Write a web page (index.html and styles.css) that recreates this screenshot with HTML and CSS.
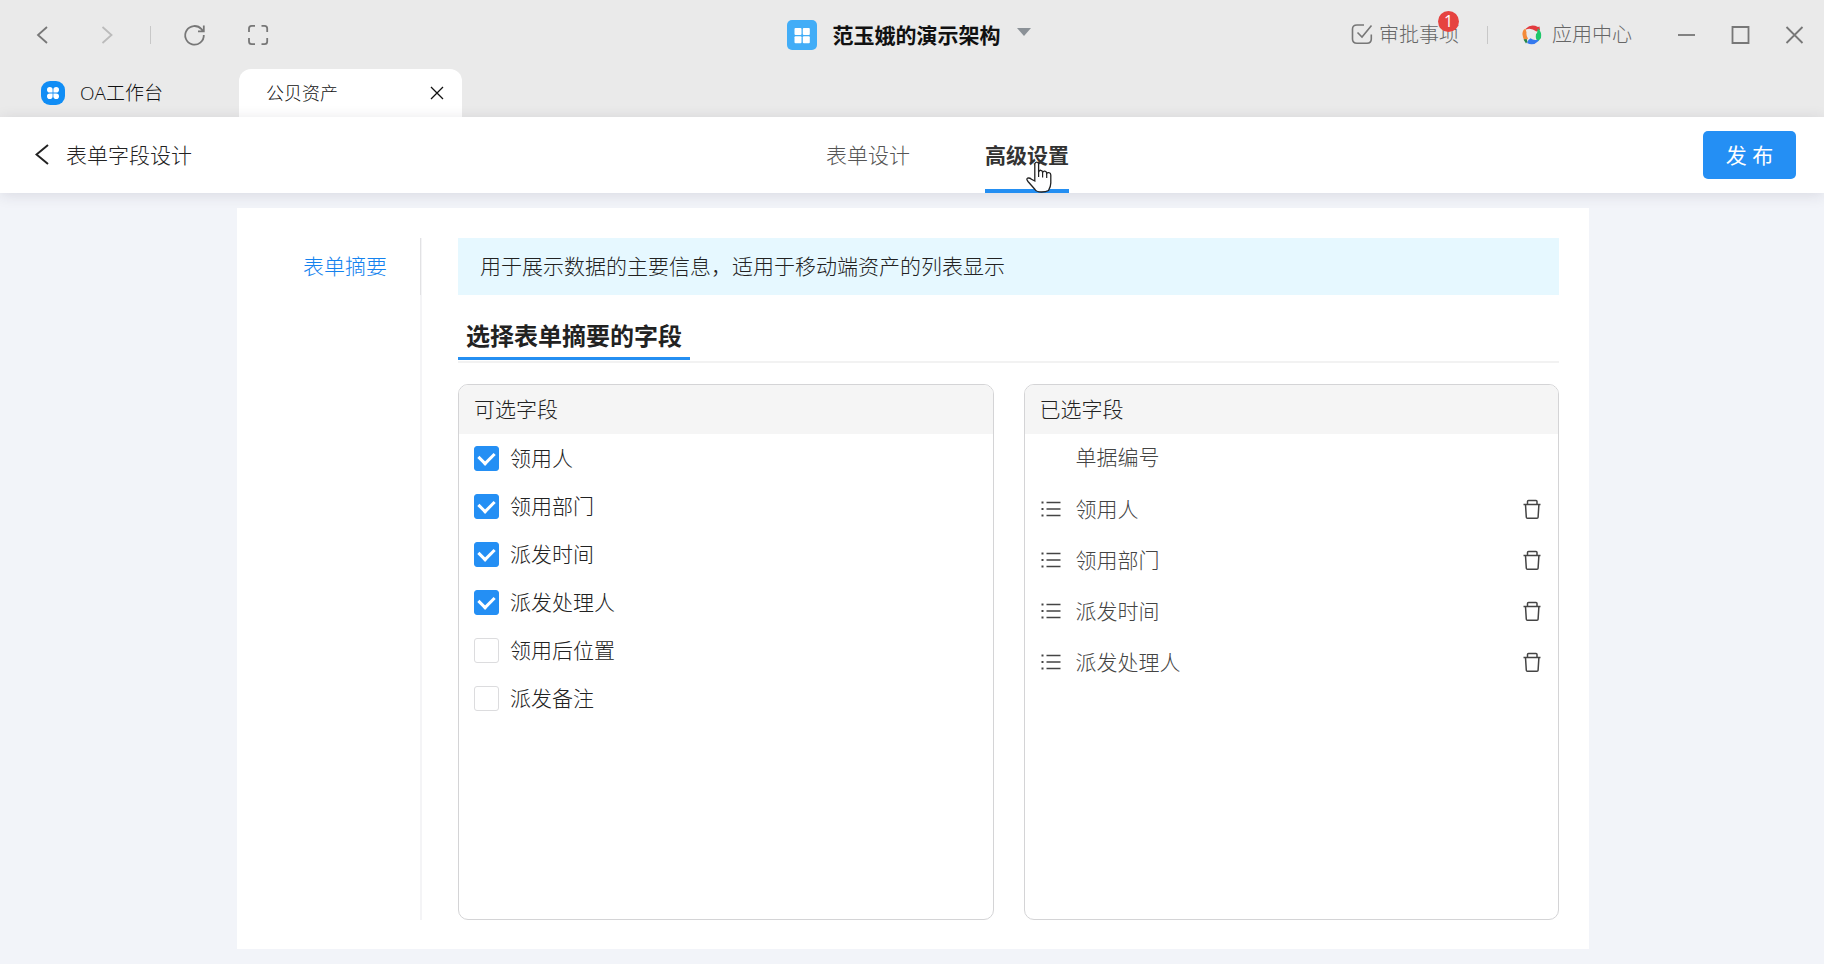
FILE: index.html
```html
<!DOCTYPE html>
<html lang="zh-CN">
<head>
<meta charset="utf-8">
<meta name="viewport" content="width=device-width, initial-scale=1">
<title>公贝资产 - 高级设置</title>
<link rel="stylesheet" href="styles.css">
</head>
<body>
<svg class="defs" aria-hidden="true">
  <symbol id="i-list" viewBox="0 0 20 20"><path d="M5.500 3.500H19.500M5.500 10H19.500M5.500 16.500H19.500" fill="none" stroke="currentColor" stroke-width="1.700"/><path d="M.5 2.500h2v2h-2zM.5 9h2v2h-2zM.5 15.500h2v2h-2z" fill="currentColor"/></symbol>
  <symbol id="i-trash" viewBox="0 0 24 24"><path d="M3.500 7.500H20.500M7.500 7V4.500Q7.500 3.500 8.500 3.500H16Q17 3.500 17 4.500V7M5.500 7.500L6.300 20.200Q6.400 21.200 7.400 21.200H17Q18 21.200 18.100 20.200L18.900 7.500" fill="none" stroke="currentColor" stroke-width="1.500"/></symbol>
</svg>

<header class="titlebar">
  <div class="browse">
    <button class="icon-btn" type="button" aria-label="后退"><svg viewBox="0 0 24 24"><path d="M16 4L7 12L16 20"/></svg></button>
    <button class="icon-btn icon-btn--off" type="button" aria-label="前进" disabled><svg viewBox="0 0 24 24"><path d="M7.500 4L16.500 12L7.500 20"/></svg></button>
    <span class="sep"></span>
    <button class="icon-btn" type="button" aria-label="刷新"><svg viewBox="0 0 24 24"><path d="M21.800 12A9.300 9.300 0 1 1 19.500 6.200L21 8M21.800 2.500V8.300H16"/></svg></button>
    <button class="icon-btn" type="button" aria-label="全屏"><svg viewBox="0 0 24 24"><path d="M3 9V5.500Q3 2.800 5.700 2.800H9M15.500 2.800H18.500Q21.200 2.800 21.200 5.500V9M21.200 15V18.500Q21.200 21.200 18.500 21.200H15.500M9 21.200H5.700Q3 21.200 3 18.500V15"/></svg></button>
  </div>
  <button class="org" type="button">
    <svg class="org__logo" viewBox="0 0 30 30"><rect width="30" height="30" rx="5" fill="#42adf7"/><g fill="#fff"><rect x="7.500" y="8" width="7" height="7" rx="1"/><rect x="15.800" y="8" width="7" height="7" rx="1"/><rect x="7.500" y="16.300" width="7" height="7" rx="1"/><rect x="15.800" y="16.300" width="7" height="7" rx="1"/></g></svg>
    <span>范玉娥的演示架构</span>
    <svg class="org__caret" viewBox="0 0 14 8"><path d="M0 0H14L7 8Z" fill="#8b9197"/></svg>
  </button>
  <div class="tools">
    <button class="tool tool--todo" type="button">
      <svg class="tool__check" viewBox="0 0 22 22"><path d="M13 2H6Q1.500 2 1.500 6V16Q1.500 20.200 6 20.200H16Q20.300 20.200 20.300 16V11.500M6.500 9.500L11 14L20.500 2.500" fill="none" stroke="#777" stroke-width="1.600"/></svg>
      <span>审批事项</span>
      <span class="badge">1</span>
    </button>
    <span class="sep"></span>
    <button class="tool" type="button">
      <svg class="tool__app" viewBox="0 0 20 20"><path d="M4 3.500Q9-1.500 16 2L17.500 1.500L18 5L14.500 6.500Q9 2.500 4 4.500Z" fill="#e23b3f"/><path d="M16.200 3.500Q20 7 19 13L16.500 16Q13 15 14 9Q15.500 8 15.500 5Z" fill="#1fc76a"/><path d="M16 14.500L16.500 16Q11 21.500 5 18Q5.500 15 8.500 13.300Q12 16 16 14.500Z" fill="#3579ee"/><path d="M3.500 3.500L4.500 7.500Q4 11 6 13.500L4.500 15L3.500 17Q-1.500 10 1.500 5Z" fill="#f48a38"/><path d="M1.500 14.500L4.500 14L5.500 16.500L4 18.500Z" fill="#23864b"/></svg>
      <span>应用中心</span>
    </button>
    <div class="win">
      <button class="icon-btn" type="button" aria-label="最小化"><svg viewBox="0 0 24 24"><path d="M3 12H20"/></svg></button>
      <button class="icon-btn" type="button" aria-label="最大化"><svg viewBox="0 0 24 24"><path d="M3.500 4H19.500V20H3.500Z"/></svg></button>
      <button class="icon-btn" type="button" aria-label="关闭"><svg viewBox="0 0 24 24"><path d="M3.500 4L19.500 20M19.500 4L3.500 20"/></svg></button>
    </div>
  </div>
</header>

<nav class="tabs" aria-label="标签页">
  <a class="tab tab--home" href="#">
    <svg class="tab__logo" viewBox="0 0 24 24"><rect width="24" height="24" rx="9" fill="#108df5"/><g fill="#fff"><path d="M8.800 6A2.800 2.800 0 0 1 11.600 8.800V11.600H8.800A2.800 2.800 0 0 1 8.800 6Z"/><path d="M15.200 6A2.800 2.800 0 0 0 12.400 8.800V11.600H15.200A2.800 2.800 0 0 0 15.200 6Z"/><path d="M8.800 18A2.800 2.800 0 0 0 11.600 15.200V12.400H8.800A2.800 2.800 0 0 0 8.800 18Z"/><path d="M15.200 18A2.800 2.800 0 0 1 12.400 15.200V12.400H15.200A2.800 2.800 0 0 1 15.200 18Z"/></g></svg>
    <span>OA工作台</span>
  </a>
  <div class="tab tab--active">
    <a href="#">公贝资产</a>
    <button class="tab__close" type="button" aria-label="关闭标签"><svg viewBox="0 0 14 14"><path d="M1 1L13 13M13 1L1 13" fill="none" stroke="#111" stroke-width="1.300"/></svg></button>
  </div>
</nav>

<div class="header">
  <a class="back" href="#"><svg viewBox="0 0 14 22"><path d="M13 1L1.500 10.500L13 20" fill="none" stroke="#222" stroke-width="2"/></svg><span>表单字段设计</span></a>
  <nav class="steps">
    <a class="step" href="#">表单设计</a>
    <a class="step step--active" href="#" aria-current="page">高级设置
      <svg class="pointer" viewBox="0 0 26 32" aria-hidden="true"><path d="M8.800 20V3.200Q9 1.200 10.800 1.200Q12.500 1.200 12.600 3.200V11Q13.500 9 15 9.300Q16.500 9.500 16.600 11.500Q17.500 9.800 19 10.200Q20.700 10.500 20.700 12.500Q21.500 11.200 23 11.700Q24.800 12 24.800 14V22Q24.800 25.500 22.500 29.500Q20 31 15.500 31Q10.500 31 9 28.500L2 20.500Q0 18 1.500 17.200Q3.500 16.500 5.500 18.300Z" fill="#fff" stroke="#222" stroke-width="1.300"/><path d="M12.600 10.500V16M16.600 11.500V16.500M20.700 12.500V17" fill="none" stroke="#222" stroke-width="1.200"/></svg>
    </a>
  </nav>
  <button class="publish" type="button">发 布</button>
</div>

<main class="main">
  <div class="card">
    <nav class="side"><a class="side__item" href="#">表单摘要</a></nav>
    <section class="content">
      <p class="notice">用于展示数据的主要信息，适用于移动端资产的列表显示</p>
      <div class="heading"><h1>选择表单摘要的字段</h1></div>
      <div class="panels">
        <section class="panel">
          <h2>可选字段</h2>
          <ul class="options">
            <li><label><input type="checkbox" checked><span>领用人</span></label></li>
            <li><label><input type="checkbox" checked><span>领用部门</span></label></li>
            <li><label><input type="checkbox" checked><span>派发时间</span></label></li>
            <li><label><input type="checkbox" checked><span>派发处理人</span></label></li>
            <li><label><input type="checkbox"><span>领用后位置</span></label></li>
            <li><label><input type="checkbox"><span>派发备注</span></label></li>
          </ul>
        </section>
        <section class="panel">
          <h2>已选字段</h2>
          <ul class="chosen">
            <li><span class="grip"></span><span>单据编号</span></li>
            <li><svg class="grip"><use href="#i-list"/></svg><span>领用人</span><button class="remove" type="button" aria-label="删除领用人"><svg><use href="#i-trash"/></svg></button></li>
            <li><svg class="grip"><use href="#i-list"/></svg><span>领用部门</span><button class="remove" type="button" aria-label="删除领用部门"><svg><use href="#i-trash"/></svg></button></li>
            <li><svg class="grip"><use href="#i-list"/></svg><span>派发时间</span><button class="remove" type="button" aria-label="删除派发时间"><svg><use href="#i-trash"/></svg></button></li>
            <li><svg class="grip"><use href="#i-list"/></svg><span>派发处理人</span><button class="remove" type="button" aria-label="删除派发处理人"><svg><use href="#i-trash"/></svg></button></li>
          </ul>
        </section>
      </div>
    </section>
  </div>
</main>
</body>
</html>
```
FILE: styles.css
```css
* { box-sizing: border-box; }

body {
  margin: 0;
  min-height: 100vh;
  display: flex;
  flex-direction: column;
  background: #f2f4f9;
  color: #222;
  font: 300 21px/26px "Open Sans", "Noto Sans CJK SC", sans-serif;
}

h1, h2, p, ul { margin: 0; padding: 0; }
ul { list-style: none; }
a { color: inherit; text-decoration: none; }
svg { display: block; }
.defs { position: absolute; width: 0; height: 0; }

button {
  padding: 0;
  border: 0;
  background: none;
  color: inherit;
  font: inherit;
  cursor: pointer;
}

/* Window title bar */
.titlebar {
  display: grid;
  grid-template-columns: 1fr auto 1fr;
  align-items: center;
  height: 69px;
  padding: 0 17px 0 31px;
  background: #eaeaea;
}

.browse { display: flex; align-items: center; gap: 40px; }
.browse .sep { margin: 0 -9px; }
.icon-btn { width: 24px; height: 24px; color: #777; }
.icon-btn--off { color: #bbb; }
.icon-btn svg {
  width: 24px;
  height: 24px;
  fill: none;
  stroke: currentColor;
  stroke-width: 1.8;
}
.sep { width: 1px; height: 18px; background: #c8c8c8; }

.org {
  display: flex;
  align-items: center;
  gap: 16px;
  margin-right: 21px;
  color: #111;
  font-weight: 700;
}
.org__logo { width: 30px; height: 30px; }
.org__caret { width: 14px; height: 8px; margin-bottom: 6px; }

.tools {
  display: flex;
  align-items: center;
  justify-content: flex-end;
  color: #666;
  font-size: 20px;
}
.tool { position: relative; display: flex; align-items: center; }
.tool__check { width: 22px; height: 22px; margin: 0 6px 2px 0; }
.tool__app { width: 20px; height: 20px; margin-right: 10px; }
.tools .sep { margin: 0 34px 0 28px; }
.badge {
  position: absolute;
  top: -11px;
  right: 0;
  width: 21px;
  height: 21px;
  border-radius: 50%;
  background: #e64340;
  color: #fff;
  font-size: 16px;
  font-weight: 400;
  line-height: 21px;
  text-align: center;
}
.win { display: flex; gap: 30px; margin-left: 43px; }

/* Browser tabs */
.tabs {
  display: flex;
  height: 48px;
  background: #eaeaea;
  color: #111;
  font-size: 18px;
}
.tab { display: flex; align-items: center; }
.tab--home { width: 239px; padding-left: 41px; gap: 15px; font-size: 19px; }
.tab__logo { width: 24px; height: 24px; }
.tab--active {
  justify-content: space-between;
  width: 223px;
  padding: 0 18px 0 27px;
  border-radius: 12px 12px 0 0;
  background: #fff;
}
.tab__close svg { width: 14px; height: 14px; }

/* Designer header */
.header {
  position: relative;
  display: flex;
  align-items: center;
  justify-content: space-between;
  height: 76px;
  padding: 0 28px 0 35px;
  background: #fff;
  box-shadow: 0 2px 14px rgba(40, 30, 60, 0.12);
}
.back { display: flex; align-items: center; gap: 17px; }
.back svg { width: 14px; height: 22px; }
.steps { display: flex; align-self: stretch; gap: 75px; }
.step {
  position: relative;
  padding-top: 25px;
  border-bottom: 4px solid transparent;
  color: #555;
}
.step--active { border-color: #248ff2; color: #333; font-weight: 700; }
.pointer { position: absolute; top: 44px; left: 41px; width: 26px; height: 32px; }
.publish {
  width: 93px;
  height: 48px;
  border-radius: 5px;
  background: #248ff4;
  color: #fff;
  font-weight: 400;
}

/* Settings card */
.main {
  display: flex;
  flex: 1;
  padding: 15px 235px 15px 237px;
}
.card {
  display: flex;
  flex: 1;
  gap: 36px;
  padding: 30px 30px 29px;
  background: #fff;
}
.side { flex: none; width: 155px; border-right: 2px solid #f4f4f6; }
.side__item {
  display: block;
  margin-right: -1px;
  padding: 15px 33px 16px 0;
  border-right: 1px solid #e2e2e4;
  color: #1482ee;
  text-align: right;
}
.content { display: flex; flex: 1; flex-direction: column; min-width: 0; }
.notice { padding: 15px 22px 16px; background: #e6f8ff; }
.heading { margin: 25px 0 21px; border-bottom: 2px solid #f2f2f2; }
.heading h1 {
  width: max-content;
  margin-bottom: 1px;
  padding: 0 8px 5px;
  border-bottom: 3px solid #248ff2;
  font-size: 24px;
  line-height: 32px;
}
.panels {
  display: grid;
  flex: 1;
  grid-template-columns: 1fr 1fr;
  gap: 30px;
}
.panel { overflow: hidden; border: 1px solid #d4d4d6; border-radius: 10px; }
.panel h2 {
  padding: 11px 15px 12px;
  background: #f5f5f5;
  font-size: 21px;
  font-weight: inherit;
}
.options label {
  display: flex;
  align-items: center;
  gap: 11px;
  height: 48px;
  padding-left: 15px;
}
.options input {
  display: grid;
  place-items: center;
  width: 25px;
  height: 25px;
  margin: 0;
  border: 1px solid #dcdcde;
  border-radius: 3px;
  background: #fff;
  appearance: none;
}
.options input:checked { border-color: #248ff4; background: #248ff4; }
.options input:checked::after {
  content: "";
  width: 8px;
  height: 12px;
  margin-bottom: 3px;
  border: solid #fff;
  border-width: 0 3px 3px 0;
  transform: rotate(45deg);
}
.chosen { color: #444; }
.chosen li {
  display: flex;
  align-items: center;
  gap: 15px;
  height: 51px;
  padding: 0 14px 0 16px;
}
.chosen li:first-child { height: 49px; padding-bottom: 3px; }
.grip { width: 20px; height: 20px; }
.remove { margin-left: auto; }
.remove svg { width: 24px; height: 24px; }
```
